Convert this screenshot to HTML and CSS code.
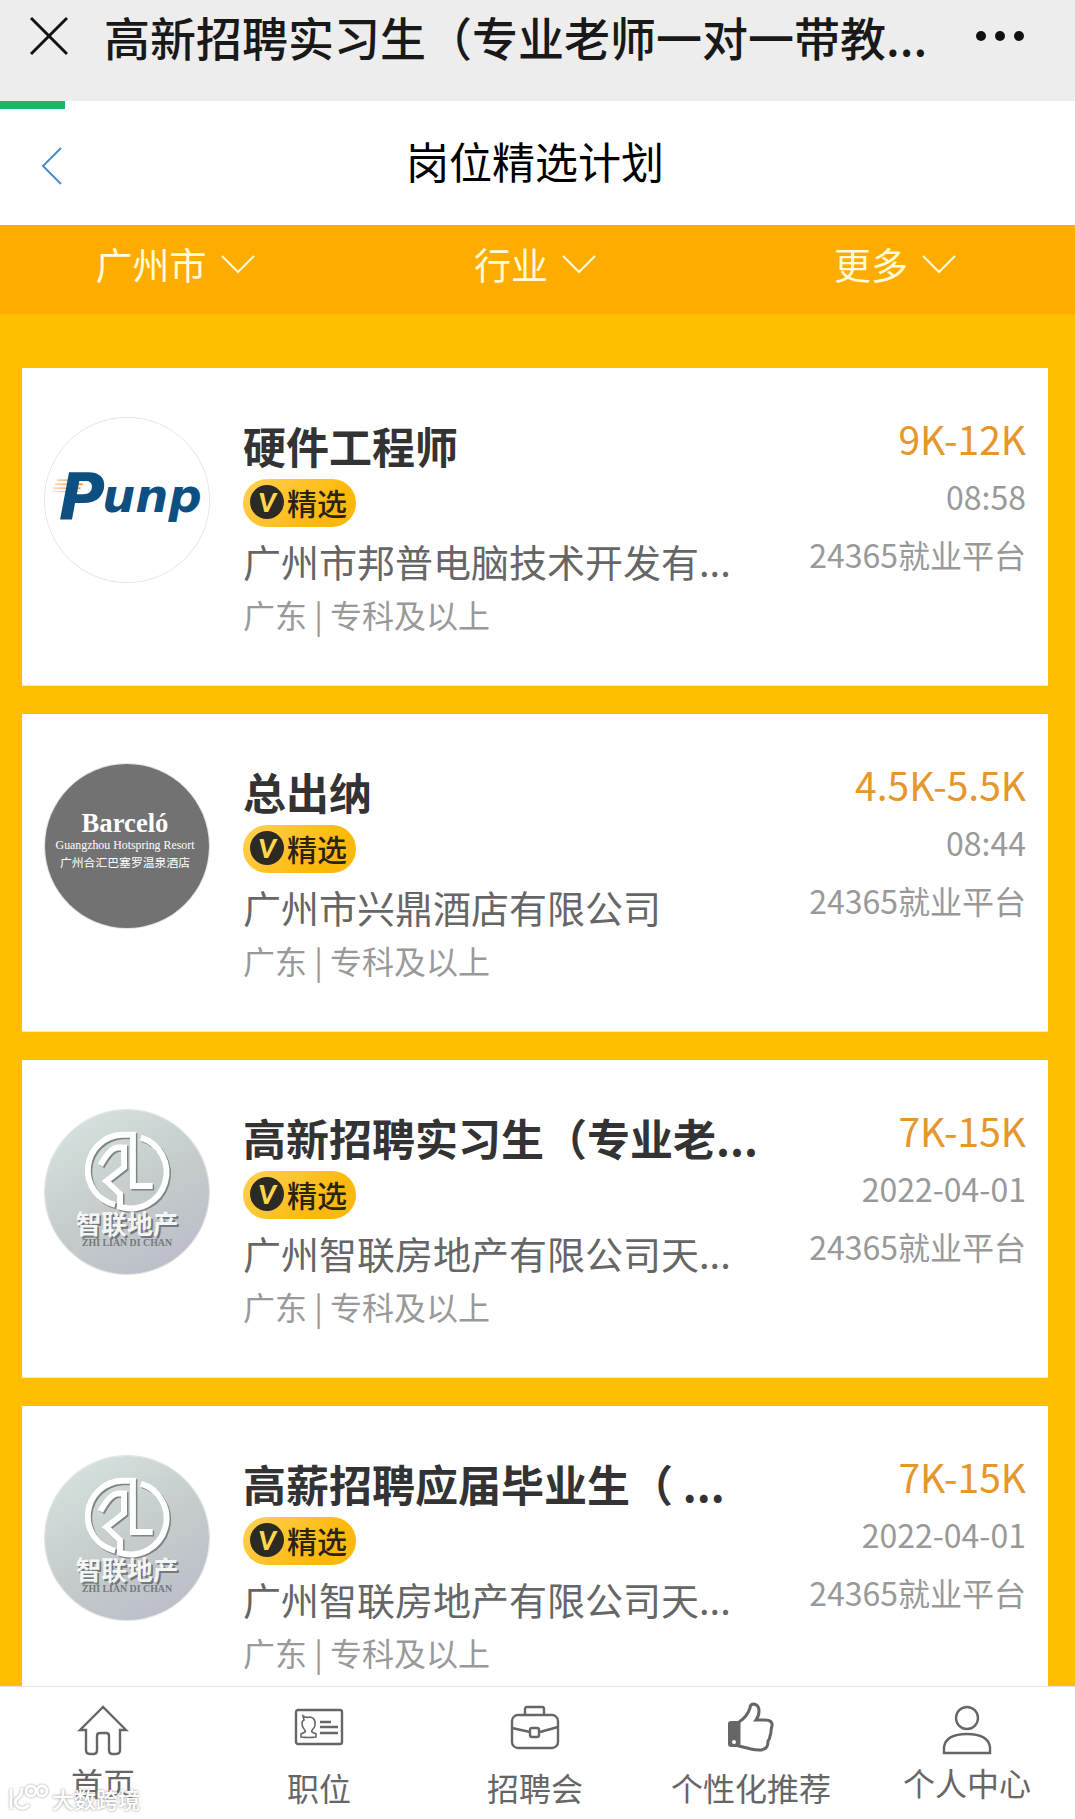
FILE: index.html
```html
<!DOCTYPE html>
<html lang="zh-CN">
<head>
  <meta charset="UTF-8">
  <meta name="viewport" content="width=device-width, initial-scale=1.0">
  <title>岗位精选计划</title>
  <link rel="stylesheet" href="styles.css">
</head>
<body>
  <!-- shared drawings -->
  <svg class="defs" aria-hidden="true">
    <defs>
      <linearGradient id="silver" x1="0.2" y1="0" x2="0.8" y2="1">
        <stop offset="0" stop-color="#d5e3df"/>
        <stop offset="0.5" stop-color="#c6cccc"/>
        <stop offset="1" stop-color="#bbbdc9"/>
      </linearGradient>
      <linearGradient id="speed" x1="0" y1="0" x2="1" y2="0">
        <stop offset="0" stop-color="#fbe3c8"/>
        <stop offset="1" stop-color="#e5923c"/>
      </linearGradient>
      <symbol id="arrow" viewBox="0 0 34 20">
        <path d="M1 2L17 18L33 2" fill="none" stroke="currentColor" stroke-width="2"/>
      </symbol>
      <symbol id="zl" viewBox="0 0 166 166">
        <rect width="166" height="166" fill="url(#silver)"/>
        <g fill="none" stroke="#7f8486" stroke-width="6" transform="translate(1.5 1.5)">
          <path d="M71 96A36 36 0 0 1 78 25H89V77H109"/>
          <path d="M97 28A36 36 0 0 1 76 98V85L62 72L80 58V38H74Q66 38 56 56"/>
        </g>
        <g fill="none" stroke="#fff" stroke-width="6">
          <path d="M71 96A36 36 0 0 1 78 25H89V77H109"/>
          <path d="M97 28A36 36 0 0 1 76 98V85L62 72L80 58V38H74Q66 38 56 56"/>
        </g>
        <text class="zl-cn zl-shade" x="85" y="128">智联地产</text>
        <text class="zl-cn" x="83" y="126">智联地产</text>
        <text class="zl-en" x="83" y="138">ZHI LIAN DI CHAN</text>
      </symbol>
    </defs>
  </svg>

  <header class="topbar">
    <button class="icon-btn" aria-label="关闭">
      <svg width="38" height="40" viewBox="0 0 38 40"><path d="M1 2L37 38M37 2L1 38" stroke="#111" stroke-width="3"/></svg>
    </button>
    <div class="topbar-title">高新招聘实习生（专业老师一对一带教...</div>
    <button class="icon-btn" aria-label="更多操作">
      <svg width="50" height="12" viewBox="0 0 50 12" fill="#111"><circle cx="6" cy="6" r="5"/><circle cx="25" cy="6" r="5"/><circle cx="44" cy="6" r="5"/></svg>
    </button>
  </header>

  <div class="page-head">
    <div class="progress"></div>
    <button class="icon-btn back" aria-label="返回">
      <svg width="22" height="38" viewBox="0 0 22 38"><path d="M20 1L2 19L20 37" fill="none" stroke="#4b8bd3" stroke-width="2"/></svg>
    </button>
    <h1>岗位精选计划</h1>
  </div>

  <div class="filters">
    <button>广州市<svg width="34" height="20"><use href="#arrow"/></svg></button>
    <button>行业<svg width="34" height="20"><use href="#arrow"/></svg></button>
    <button>更多<svg width="34" height="20"><use href="#arrow"/></svg></button>
  </div>

  <main class="list">
    <article class="card">
      <svg class="avatar" viewBox="0 0 166 166" role="img" aria-label="Punp">
        <rect width="166" height="166" fill="#fff"/>
        <path d="M12 62H40V64H12ZM10 66H38V68H10ZM8 70H36V72H8ZM7 74H34V75H7Z" fill="url(#speed)"/>
        <text class="pump pump-big" x="14" y="102">P</text>
        <text class="pump" x="58" y="95">unp</text>
      </svg>
      <div class="info">
        <h2>硬件工程师</h2>
        <span class="badge"><i>V</i>精选</span>
        <p class="company">广州市邦普电脑技术开发有...</p>
        <p class="meta">广东 | 专科及以上</p>
      </div>
      <div class="side">
        <p class="salary">9K-12K</p>
        <p>08:58</p>
        <p>24365就业平台</p>
      </div>
    </article>

    <article class="card">
      <svg class="avatar" viewBox="0 0 166 166" role="img" aria-label="Barceló">
        <rect width="166" height="166" fill="#727272"/>
        <text class="bar-name" x="81" y="69">Barceló</text>
        <text class="bar-sub" x="81" y="86">Guangzhou Hotspring Resort</text>
        <text class="bar-cn" x="81" y="104">广州合汇巴塞罗温泉酒店</text>
      </svg>
      <div class="info">
        <h2>总出纳</h2>
        <span class="badge"><i>V</i>精选</span>
        <p class="company">广州市兴鼎酒店有限公司</p>
        <p class="meta">广东 | 专科及以上</p>
      </div>
      <div class="side">
        <p class="salary">4.5K-5.5K</p>
        <p>08:44</p>
        <p>24365就业平台</p>
      </div>
    </article>

    <article class="card">
      <svg class="avatar" role="img" aria-label="智联地产"><use href="#zl"/></svg>
      <div class="info">
        <h2>高新招聘实习生（专业老...</h2>
        <span class="badge"><i>V</i>精选</span>
        <p class="company">广州智联房地产有限公司天...</p>
        <p class="meta">广东 | 专科及以上</p>
      </div>
      <div class="side">
        <p class="salary">7K-15K</p>
        <p>2022-04-01</p>
        <p>24365就业平台</p>
      </div>
    </article>

    <article class="card">
      <svg class="avatar" role="img" aria-label="智联地产"><use href="#zl"/></svg>
      <div class="info">
        <h2>高薪招聘应届毕业生（ ...</h2>
        <span class="badge"><i>V</i>精选</span>
        <p class="company">广州智联房地产有限公司天...</p>
        <p class="meta">广东 | 专科及以上</p>
      </div>
      <div class="side">
        <p class="salary">7K-15K</p>
        <p>2022-04-01</p>
        <p>24365就业平台</p>
      </div>
    </article>
  </main>

  <nav class="tabs">
    <a href="#">
      <svg viewBox="0 0 50 50"><path d="M25 2L2 25H8V45Q8 49 12 49H16Q19 49 19 45V31Q19 28 22 28H28Q31 28 31 31V45Q31 49 34 49H38Q42 49 42 45V25H48Z"/></svg>
      <span>首页</span>
    </a>
    <a href="#" class="low">
      <svg viewBox="0 0 50 50"><rect x="2" y="5" width="46" height="34" rx="2"/><path d="M26 17H37M26 22H44M26 28H44"/><path stroke-width="1.6" d="M9 11Q12 13 16 12Q22 13 21 20Q21 22 19 24Q17 26 18 27L22 29V32Q15 33 7 32V29L11 27Q12 26 10 24Q8 22 8 18Q8 16 10 15Z"/></svg>
      <span>职位</span>
    </a>
    <a href="#" class="low">
      <svg viewBox="0 0 50 50"><rect x="2" y="10" width="46" height="33" rx="6"/><path d="M15 10V4Q15 2 17 2H32Q34 2 34 4V10M2 23L20 27M30 27L48 22"/><rect x="20" y="23" width="9" height="9" rx="2"/></svg>
      <span>招聘会</span>
    </a>
    <a href="#" class="low">
      <svg viewBox="0 0 50 50"><path stroke-width="3" d="M13 17Q21 12 24 3Q24 -1 28 -1Q33 0 33 6Q33 11 30 15H39Q47 15 46 21Q45 24 45 26Q45 29 44 31Q44 34 42 36Q42 43 38 44Q34 46 25 44L13 41Z"/><path fill="#666" stroke="none" d="M5 16H14V42H5Q2 42 2 39V19Q2 16 5 16Z"/><circle cx="8" cy="37" r="2" fill="#fff" stroke="none"/></svg>
      <span>个性化推荐</span>
    </a>
    <a href="#">
      <svg viewBox="0 0 50 50"><circle cx="25" cy="13" r="11"/><path d="M2 48V42Q4 29 25 29Q46 29 48 42V48Z"/></svg>
      <span>个人中心</span>
    </a>
  </nav>

  <div class="watermark">
    <svg width="42" height="30" viewBox="0 0 42 30" fill="none" stroke="#fff" stroke-width="3"><path d="M3 6V26M21 22Q14 28 9 23Q5 18 10 15Q14 12 14 5"/><circle cx="23" cy="8" r="5"/><circle cx="34" cy="8" r="5"/></svg>
    <span>大数跨境</span>
  </div>
</body>
</html>
```
FILE: styles.css
```css
* {
  box-sizing: border-box;
}
html {
  overflow: hidden;
}
body {
  display: flex;
  flex-direction: column;
  height: 100vh;
  margin: 0 0 0 -5px;
  font-family: "Noto Sans CJK SC", sans-serif;
  background-color: #ffbf00;
}
h1, h2, p {
  margin: 0;
}
button {
  padding: 0;
  border: none;
  background: none;
  font-family: inherit;
  cursor: pointer;
}
.defs {
  position: absolute;
  width: 0;
  height: 0;
}
.icon-btn {
  display: flex;
}

/* top bars */
.topbar {
  display: flex;
  align-items: center;
  flex: none;
  height: 101px;
  padding: 0 50px 29px 35px;
  background-color: #ededed;
}
.topbar-title {
  flex: 1;
  margin-left: 36px;
  font-size: 46px;
  line-height: 70px;
  font-weight: 500;
  color: #191919;
  white-space: nowrap;
}
.page-head {
  position: relative;
  display: flex;
  align-items: center;
  justify-content: center;
  flex: none;
  height: 124px;
  background-color: #fff;
}
.page-head h1 {
  padding-bottom: 6px;
  font-size: 43px;
  line-height: 60px;
  font-weight: 400;
  color: #000;
}
.progress {
  position: absolute;
  top: 0;
  left: 0;
  width: 70px;
  height: 8px;
  background-color: #17b765;
}
.back {
  position: absolute;
  left: 46px;
  top: 46px;
}
.filters {
  display: flex;
  flex: none;
  height: 89px;
  padding-bottom: 12px;
  background-color: #ffac00;
}
.filters button {
  display: flex;
  flex: 1;
  align-items: center;
  justify-content: center;
  gap: 14px;
  font-size: 37px;
  color: #fffbd8;
}

/* job list */
.list {
  flex: 1;
  min-height: 0;
  padding: 54px 27px 0;
  overflow-y: auto;
  scrollbar-width: none;
}
.card {
  display: flex;
  height: 318px;
  margin-bottom: 28px;
  padding: 49px 22px 0;
  border-bottom: 1px solid #ffe9b0;
  background-color: #fff;
}
.avatar {
  flex: none;
  width: 166px;
  height: 166px;
  border: 1px solid #e2e2e2;
  border-radius: 50%;
}
.info {
  flex: 1;
  min-width: 0;
  margin-left: 33px;
  white-space: nowrap;
}
.info h2 {
  font-size: 43px;
  line-height: 56px;
  font-weight: 700;
  color: #333;
}
.badge {
  display: flex;
  align-items: center;
  gap: 3px;
  width: 113px;
  height: 48px;
  margin: 6px 0 8px;
  padding: 0 0 2px 7px;
  border-radius: 24px;
  background: linear-gradient(135deg, #ffd157, #fdb90b 70%);
  font-size: 30px;
  line-height: 46px;
  font-weight: 500;
  color: #2b2311;
}
.badge i {
  width: 34px;
  height: 34px;
  border-radius: 50%;
  background-color: #2b2a25;
  font: italic 900 27px/34px Lato, sans-serif;
  text-align: center;
  color: #ffd84a;
}
.company {
  font-size: 38px;
  line-height: 52px;
  color: #666;
}
.meta {
  font-size: 32px;
  line-height: 54px;
  color: #999;
}
.side {
  padding-top: 2px;
  font-size: 32px;
  line-height: 58px;
  text-align: right;
  white-space: nowrap;
  color: #999;
}
.side .salary {
  margin-bottom: 10px;
  font-size: 39px;
  line-height: 38px;
  color: #e6962a;
}

/* company logos */
.pump {
  font: italic 700 47px "DejaVu Sans", sans-serif;
  fill: #0d4f80;
}
.pump-big {
  font-size: 64px;
}
.bar-name, .bar-sub, .bar-cn {
  text-anchor: middle;
  fill: #fff;
}
.bar-name {
  font: 700 27px "Liberation Serif", serif;
}
.bar-sub {
  font: 12px "Liberation Serif", serif;
}
.bar-cn {
  font-size: 12px;
}
.zl-cn {
  font-size: 26px;
  font-weight: 700;
  text-anchor: middle;
  fill: #f4f6f6;
}
.zl-shade {
  fill: #74787b;
}
.zl-en {
  font: 700 10px "Liberation Serif", serif;
  text-anchor: middle;
  fill: #74787b;
}

/* bottom tabs */
.tabs {
  display: flex;
  flex: none;
  height: 133px;
  padding-top: 18px;
  border-top: 1px solid #e3e3e3;
  background-color: #fff;
}
.tabs a {
  display: flex;
  flex: 1 1 0;
  flex-direction: column;
  align-items: center;
  gap: 7px;
  font-size: 32px;
  line-height: 40px;
  white-space: nowrap;
  color: #666;
  text-decoration: none;
}
.tabs .low {
  gap: 12px;
}
.tabs svg {
  width: 50px;
  height: 50px;
  overflow: visible;
  fill: none;
  stroke: #666;
  stroke-width: 2.4;
}
.watermark {
  position: absolute;
  left: 8px;
  bottom: 6px;
  display: flex;
  align-items: center;
  gap: 2px;
  font-size: 22px;
  line-height: 30px;
  font-weight: 500;
  color: #fff;
  text-shadow: 0 0 3px #888;
}
.watermark svg {
  filter: drop-shadow(0 0 1px #999);
}
```
